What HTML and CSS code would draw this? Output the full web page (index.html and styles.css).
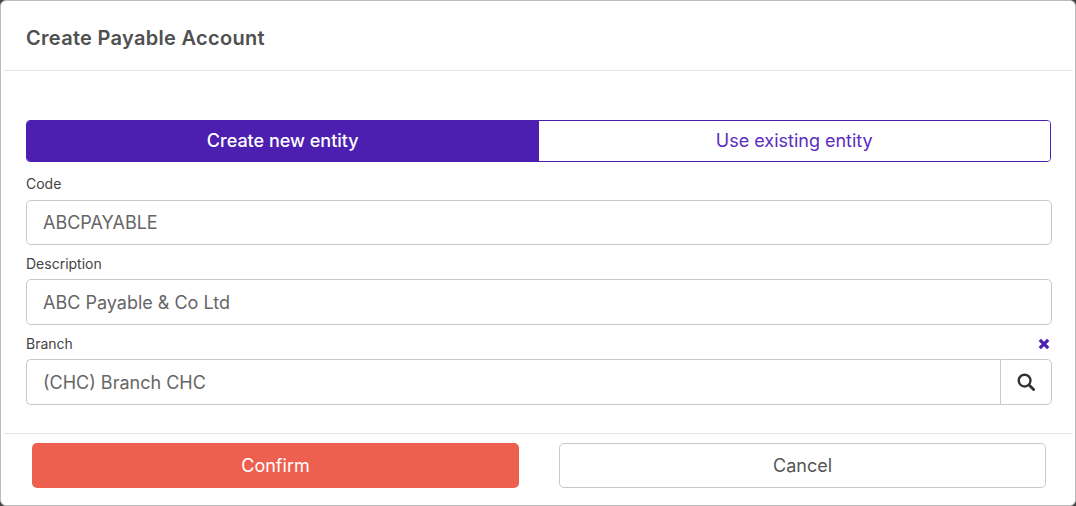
FILE: index.html
```html
<!DOCTYPE html>
<html lang="en">
<head>
    <meta charset="UTF-8">
    <title>Create Payable Account</title>
    <link rel="stylesheet" href="styles.css">
</head>
<body>
    <div class="modal">
        <div class="modal-header">
            <h2>Create Payable Account</h2>
        </div>
        <div class="modal-body">
            <div class="tabs">
                <button class="tab active">Create new entity</button>
                <button class="tab">Use existing entity</button>
            </div>
            <div class="field first">
                <div class="field-label"><label for="code">Code</label></div>
                <input type="text" id="code" value="ABCPAYABLE">
            </div>
            <div class="field">
                <div class="field-label"><label for="description">Description</label></div>
                <input type="text" id="description" value="ABC Payable &amp; Co Ltd">
            </div>
            <div class="field">
                <div class="field-label">
                    <label for="branch">Branch</label>
                    <svg class="clear-icon" viewBox="0 0 12 12" width="12" height="12">
                        <path d="M1.8 1.8 L10.2 10.2 M10.2 1.8 L1.8 10.2" stroke="#4c1fb1" stroke-width="3.2" fill="none"/>
                    </svg>
                </div>
                <div class="input-group">
                    <input type="text" id="branch" value="(CHC) Branch CHC">
                    <button class="search-button" aria-label="Search">
                        <svg viewBox="0 0 18 18" width="18" height="18">
                            <circle cx="7.6" cy="7.6" r="5.9" stroke="#333" stroke-width="2.4" fill="none"/>
                            <path d="M12 12 L16.6 16.6" stroke="#333" stroke-width="2.8" stroke-linecap="round"/>
                        </svg>
                    </button>
                </div>
            </div>
        </div>
        <div class="modal-footer">
            <button class="btn btn-confirm">Confirm</button>
            <button class="btn btn-cancel">Cancel</button>
        </div>
    </div>
</body>
</html>
```
FILE: styles.css
```css
* {
    box-sizing: border-box;
}

html, body {
    height: 100%;
}

body {
    margin: 0;
    background: #444;
    font-family: 'Inter', 'Liberation Sans', sans-serif;
    color: #555;
}

.modal {
    height: 506px;
    width: 1076px;
    background: #fff;
    border: 1px solid #bbb;
    border-radius: 6px;
    padding: 0 2px 0 3px;
    overflow: hidden;
}

.modal-header {
    height: 70px;
    padding: 5px 0 0 22px;
    border-bottom: 1px solid #e5e5e5;
    display: flex;
    align-items: center;
}

.modal-header h2 {
    margin: 0;
    font-size: 20px;
    font-weight: 600;
    letter-spacing: 0.3px;
    color: #505050;
}

.modal-body {
    height: 363px;
    padding: 49px 21px 0 22px;
    border-bottom: 1px solid #e5e5e5;
}

.tabs {
    display: flex;
    height: 42px;
    width: 1025px;
    border: 1px solid #4c1fb1;
    border-radius: 4px;
    overflow: hidden;
}

.tab {
    flex: 1;
    border: none;
    background: #fff;
    color: #5a2dc0;
    font-family: inherit;
    font-size: 18px;
    padding: 0 0 2px;
}

.tab.active {
    background: #4c1fb1;
    color: #fff;
    font-weight: 500;
}

.field-label {
    height: 34px;
    display: flex;
    justify-content: space-between;
    align-items: flex-end;
    padding: 0 2px 7px 0;
    font-size: 14px;
    color: #444;
}

.first .field-label {
    height: 38px;
    padding-bottom: 8px;
}

.clear-icon {
    margin-bottom: 2px;
}

.field input {
    display: block;
    width: 100%;
    height: 46px;
    padding: 0 16px;
    border: 1px solid #c8c8c8;
    border-radius: 5px;
    font-family: inherit;
    font-size: 18px;
    color: #666;
}

.first input {
    height: 45px;
}

.input-group {
    display: flex;
    height: 46px;
}

.input-group input {
    flex: 1;
    border-right: none;
    border-radius: 5px 0 0 5px;
}

.search-button {
    width: 52px;
    border: 1px solid #c8c8c8;
    border-radius: 0 5px 5px 0;
    background: #fff;
    display: flex;
    align-items: center;
    justify-content: center;
    padding: 0;
}

.modal-footer {
    display: flex;
    gap: 40px;
    padding: 9px 0 0 28px;
}

.btn {
    width: 487px;
    height: 45px;
    border-radius: 5px;
    font-family: inherit;
    font-size: 18px;
}

.btn-confirm {
    background: #ed6050;
    border: none;
    color: #fff;
}

.btn-cancel {
    background: #fff;
    border: 1px solid #c8c8c8;
    color: #555;
}
```
